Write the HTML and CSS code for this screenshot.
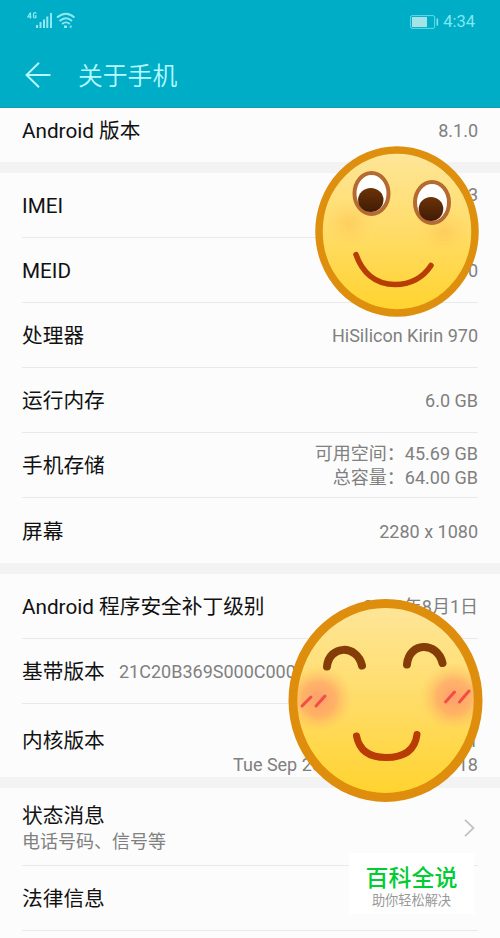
FILE: index.html
```html
<!DOCTYPE html>
<html lang="zh-CN">
<head>
  <meta charset="UTF-8">
  <title>关于手机</title>
  <link rel="stylesheet" href="styles.css">
</head>
<body>
  <header>
    <div class="status-bar">
      <svg class="signal" width="50" height="20" viewBox="0 0 50 20">
        <g fill="none" stroke="#8fe9f2" stroke-width="1.2">
          <path d="M3.5 2.5L1 6.8h3.4M3.5 2.5v6M9 3.6Q8.8 2.6 7.8 2.6T6.5 4v2.8q0 1.2 1.3 1.2T9 6.8V5.8H7.8"/>
        </g>
        <path fill="#8fe9f2" d="M9 15h2v3H9zM12.5 12h2v6h-2zM16 9.500h2v8.500h-2zM19.300 6.500h2v11.500h-2zM23 3h2v15h-2z"/>
        <g fill="none" stroke="#8fe9f2" stroke-width="1.700">
          <path d="M30 7.500Q39 0 47.500 7.500M32.500 11Q39 5.500 45 11M35 14Q39 10.800 42.800 14"/>
        </g>
        <path fill="#8fe9f2" d="M37 15.500h3v2.500h-3zM42 17l2.500-2v3z"/>
      </svg>
      <div class="status-right">
        <svg width="29" height="14" viewBox="0 0 29 14">
          <rect x="0.600" y="0.600" width="24" height="12.800" rx="1.500" fill="none" stroke="#5fdce8"/>
          <rect x="2" y="2" width="15" height="10" fill="#a5e3e6"/>
          <rect x="26.500" y="3.500" width="1.600" height="7" fill="#7fe3ec"/>
        </svg>
        <span>4:34</span>
      </div>
    </div>
    <div class="title-bar">
      <svg width="26" height="26" viewBox="0 0 26 26" fill="none" stroke="#b8fbff" stroke-width="1.900">
        <path d="M25.500 13H1.500M14 .8L1.500 13L14 25.200"/>
      </svg>
      <h1>关于手机</h1>
    </div>
  </header>

  <main>
    <section>
      <div class="row row-first"><h2>Android 版本</h2><p>8.1.0</p></div>
    </section>

    <section>
      <div class="row"><h2>IMEI</h2><p class="raised">3</p></div>
      <div class="row"><h2>MEID</h2><p>0</p></div>
      <div class="row"><h2>处理器</h2><p>HiSilicon Kirin 970</p></div>
      <div class="row"><h2>运行内存</h2><p>6.0 GB</p></div>
      <div class="row"><h2>手机存储</h2><p>可用空间：45.69 GB<br>总容量：64.00 GB</p></div>
      <div class="row"><h2>屏幕</h2><p>2280 x 1080</p></div>
      <svg class="face face-top" width="164" height="172" viewBox="0 0 164 172">
        <defs>
          <linearGradient id="skin" x1="0" y1="0" x2="0" y2="1">
            <stop offset="0" stop-color="#fee69a"/>
            <stop offset="0.500" stop-color="#ffdc68"/>
            <stop offset="1" stop-color="#ffd32c"/>
          </linearGradient>
          <radialGradient id="glow">
            <stop offset="0" stop-color="#fbb64c" stop-opacity="0.400"/>
            <stop offset="1" stop-color="#ffc94f" stop-opacity="0"/>
          </radialGradient>
          <linearGradient id="pupil" x1="0" y1="0" x2="0" y2="1">
            <stop offset="0" stop-color="#6b3307"/>
            <stop offset="1" stop-color="#411b06"/>
          </linearGradient>
        </defs>
        <ellipse cx="82" cy="85.500" rx="78" ry="81.500" fill="url(#skin)" stroke="#de8f0e" stroke-width="7.500"/>
        <ellipse cx="34" cy="77" rx="26" ry="24" fill="url(#glow)"/>
        <ellipse cx="129" cy="86" rx="26" ry="24" fill="url(#glow)"/>
        <ellipse cx="56.500" cy="47.500" rx="17" ry="20.500" fill="#fff" stroke="#b56a31" stroke-width="4"/>
        <ellipse cx="117" cy="56.500" rx="17" ry="20.500" fill="#fff" stroke="#b56a31" stroke-width="4"/>
        <ellipse cx="55.800" cy="54" rx="12.700" ry="12" fill="url(#pupil)"/>
        <ellipse cx="116" cy="63" rx="12.300" ry="12" fill="url(#pupil)"/>
        <path d="M41 108.500C47 126 60 138.500 80 138.500C98 138.500 109 130 116 119.500" fill="none" stroke="#b83d05" stroke-width="5.500" stroke-linecap="round"/>
      </svg>
    </section>

    <section>
      <div class="row"><h2>Android 程序安全补丁级别</h2><p>2018年8月1日</p></div>
      <div class="row"><h2>基带版本</h2><p class="baseband">21C20B369S000C000</p></div>
      <div class="row row-kernel"><h2>内核版本</h2><p>4.9.97<br>android #1<br>Tue Sep 25 12:08:08 CST 2018</p></div>
      <svg class="face face-bottom" width="195" height="204" viewBox="0 0 195 204">
        <defs>
          <radialGradient id="blush">
            <stop offset="0" stop-color="#ff946c" stop-opacity="0.850"/>
            <stop offset="0.500" stop-color="#ff9d66" stop-opacity="0.650"/>
            <stop offset="1" stop-color="#ffc35d" stop-opacity="0"/>
          </radialGradient>
          <clipPath id="inside"><ellipse cx="97.500" cy="101.500" rx="88.500" ry="93"/></clipPath>
        </defs>
        <ellipse cx="97.500" cy="101.500" rx="92.500" ry="97" fill="url(#skin)" stroke="#de8e0c" stroke-width="9"/>
        <g clip-path="url(#inside)">
          <circle cx="31" cy="100" r="34" fill="url(#blush)"/>
          <circle cx="166" cy="98" r="34" fill="url(#blush)"/>
        </g>
        <g fill="none" stroke-linecap="round">
          <g stroke="#843d06" stroke-width="8">
            <path d="M39 67.500C41 46 69 45 74 66.500"/>
            <path d="M119 65.500C121 43 149 42 154.500 64"/>
          </g>
          <path d="M68.500 137C71 150 80 158.500 98 158.500C116 158.500 127 151 129 135.500" stroke="#b93c05" stroke-width="7"/>
          <g stroke="#f14e4a" stroke-width="3">
            <path d="M14 107L23 98M28 107L37 97M157.500 103L166.500 93M171.500 103L181 92"/>
          </g>
        </g>
      </svg>
    </section>

    <section>
      <div class="row row-info">
        <div>
          <h2>状态消息</h2>
          <p>电话号码、信号等</p>
        </div>
        <svg width="11" height="18" viewBox="0 0 11 18" fill="none" stroke="#c2c2c2" stroke-width="1.800">
          <path d="M1 .8L9.500 9L1 17.200"/>
        </svg>
      </div>
      <div class="row row-legal"><h2>法律信息</h2></div>
    </section>
  </main>

  <div class="watermark">
    <strong>百科全说</strong>
    <span>助你轻松解决</span>
  </div>
</body>
</html>
```
FILE: styles.css
```css
* {
  box-sizing: border-box;
}

body {
  position: relative;
  width: 500px;
  height: 938px;
  margin: 0;
  overflow: hidden;
  background-color: #fcfcfc;
  font-family: Roboto, "Noto Sans CJK SC", sans-serif;
}

h1, h2, p {
  margin: 0;
  font-weight: 400;
}

svg {
  display: block;
  flex: none;
}

header {
  height: 108px;
  background-color: #00adc7;
  border-bottom: 1px solid #159bb0;
}

.status-bar {
  height: 43px;
  padding: 10px 25px 0 27px;
  display: flex;
  justify-content: space-between;
}

.status-right {
  display: flex;
  align-items: center;
  gap: 4px;
  height: 23px;
  color: #7fe9f2;
  font-size: 16.5px;
}

.title-bar {
  height: 64px;
  padding-left: 25px;
  display: flex;
  align-items: center;
  gap: 27px;
}

h1 {
  padding-top: 4px;
  color: #b8fbff;
  font-size: 24.8px;
  font-weight: 350;
  line-height: 36px;
}

section {
  position: relative;
  border-bottom: 11px solid #f3f3f3;
}

section:last-child {
  border-bottom: none;
}

.row {
  height: 65px;
  margin: 0 22px;
  padding-top: 2px;
  display: flex;
  align-items: center;
  justify-content: space-between;
  border-bottom: 1px solid #e9e9e9;
}

section .row:nth-child(6),
.row-first,
.row-kernel {
  border-bottom: none;
}

h2 {
  color: #111;
  font-size: 20.7px;
  line-height: 28px;
  white-space: nowrap;
}

.row p {
  color: #808080;
  font-size: 18px;
  line-height: 24px;
  text-align: right;
  white-space: nowrap;
}

.row .raised {
  padding-bottom: 22px;
}

.row-first {
  height: 54px;
  padding-bottom: 10px;
}

.row .baseband {
  width: 359px;
  text-align: left;
}

.row-kernel {
  height: 73px;
  padding-top: 1px;
}

.row-kernel p {
  padding-bottom: 1px;
}

.row-info {
  height: 78px;
}

.row-info p {
  text-align: left;
}

.row-info svg {
  margin-right: 3px;
}

.face {
  position: absolute;
  z-index: 1;
}

.face-top {
  left: 315px;
  top: -27px;
}

.face-bottom {
  left: 288px;
  top: 25px;
}

.watermark {
  position: absolute;
  left: 349px;
  top: 853px;
  width: 125px;
  height: 61px;
  padding-top: 11px;
  background-color: #fff;
  text-align: center;
}

.watermark strong,
.watermark span {
  display: block;
}

.watermark strong {
  color: #0c3;
  font-size: 23px;
  font-weight: 500;
  line-height: 30px;
}

.watermark span {
  color: #999;
  font-size: 13.2px;
  line-height: 14px;
}
```
